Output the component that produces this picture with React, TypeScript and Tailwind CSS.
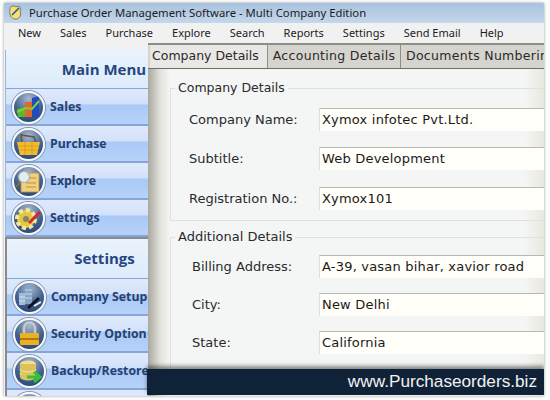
import { FC, ReactNode } from 'react';

const Orb: FC<{ children?: ReactNode }> = ({ children }) => (
  <div className="w-[33px] h-[33px] shrink-0 rounded-full border-[2px] border-[#f4f7fb] bg-[radial-gradient(circle_at_50%_20%,#a9b8cc,#41608f_55%,#22406f_100%)] shadow-[0_0_0_1px_#8a95a8] flex items-center justify-center overflow-hidden">
    <svg width="29" height="29" viewBox="0 0 29 29">{children}</svg>
  </div>
);

const SalesIcon = () => (
  <Orb>
    <path d="M3 16 L11 14 V24 H4 Z" fill="#55bb2c" />
    <rect x="11" y="9" width="7" height="15" fill="#e2672a" />
    <path d="M18 5 L25 3 V24 H18 Z" fill="#1f4cc0" />
    <path d="M3 19 L12 15 L18 16 L25 8" fill="none" stroke="#7fd13c" strokeWidth="2" />
  </Orb>
);
const PurchaseIcon = () => (
  <Orb>
    <path d="M8 12 L7 5 L20 7 L22 13" fill="none" stroke="#5d5a44" strokeWidth="1.6" />
    <path d="M3 12 L26 12 L23 25 H6 Z" fill="#f0bc2e" />
    <path d="M5 16 H25 M6 20 H24 M11 12 V25 M18 12 V25" stroke="#d2981a" strokeWidth="0.8" />
  </Orb>
);
const ExploreIcon = () => (
  <Orb>
    <rect x="7" y="6" width="18" height="19" fill="#efd083" stroke="#b98d3f" strokeWidth="0.8" />
    <path d="M14 11 H22 M12 16 H22 M12 20 H22" stroke="#c29038" strokeWidth="1.2" />
    <circle cx="10" cy="10" r="5.5" fill="#e3eef0" stroke="#a4b1b5" strokeWidth="1.2" />
    <path d="M6 15 L2 20" stroke="#8b6a36" strokeWidth="2" />
  </Orb>
);
const SettingsIcon = () => (
  <Orb>
    <circle cx="12" cy="15" r="9" fill="#e4c63f" stroke="#f2e79a" strokeWidth="4" strokeDasharray="4 3" />
    <circle cx="12" cy="15" r="3" fill="#7f8667" />
    <path d="M15 19 L26 8" stroke="#cf2a34" strokeWidth="3" />
  </Orb>
);
const CompanyIcon = () => (
  <Orb>
    <rect x="10" y="3" width="7" height="18" fill="#86a6c8" />
    <rect x="4" y="10" width="6" height="12" fill="#a3bcd6" />
    <path d="M10 7 H17 M10 11 H17 M10 15 H17 M4 14 H10 M4 18 H10" stroke="#d7e4f0" strokeWidth="0.8" />
    <path d="M13 25 L24 15" stroke="#10131c" strokeWidth="3" />
    <path d="M19 23 L26 19" stroke="#e9edf0" strokeWidth="2" />
  </Orb>
);
const LockIcon = () => (
  <Orb>
    <path d="M9 14 V8 A5 5 0 0 1 20 8 V14" fill="none" stroke="#c3cbcf" strokeWidth="2.6" />
    <rect x="5" y="13" width="19" height="12" rx="1" fill="#ecb021" />
    <rect x="5" y="18" width="19" height="2" fill="#a97a12" />
  </Orb>
);
const BackupIcon = () => (
  <Orb>
    <ellipse cx="13" cy="7" rx="8" ry="3.5" fill="#f0e08a" />
    <rect x="5" y="7" width="16" height="13" fill="#dcc25c" />
    <path d="M5 12 A8 3 0 0 0 21 12 M5 16 A8 3 0 0 0 21 16" fill="none" stroke="#f2e59a" strokeWidth="1" />
    <ellipse cx="13" cy="20" rx="8" ry="3.5" fill="#dcc25c" />
    <path d="M12 20 H24 M19 15 L25 20 L19 25" fill="none" stroke="#30c238" strokeWidth="3" />
  </Orb>
);

const SideItem: FC<{ icon: ReactNode; label: string }> = ({ icon, label }) => (
  <div className="h-[37px] shrink-0 flex items-center gap-[5px] pl-[6px] pt-[1px] border-b-[2px] border-[#85a6dc] bg-[linear-gradient(#dfe9fb_0%,#d3e2fa_42%,#a9c9f6_46%,#b6d2f8_100%)]">
    {icon}
    <span className="font-['Open_Sans',sans-serif] font-bold text-[12.3px] text-[#26406f] whitespace-nowrap">{label}</span>
  </div>
);

const SideHead: FC<{ label: string; heightClass: string }> = ({ label, heightClass }) => (
  <div className={`${heightClass} shrink-0 flex items-center justify-center pl-[54px] border-b border-[#85a6dc] bg-[linear-gradient(#eaf3fd,#dcebfb)]`}>
    <span className="font-['Open_Sans',sans-serif] font-bold text-[15px] text-[#25477f] whitespace-nowrap">{label}</span>
  </div>
);

const Field: FC<{ label: string; value?: string; labelClass: string; boxClass?: string }> = ({
  label,
  value,
  labelClass,
  boxClass,
}) => (
  <div className={`flex items-center ${boxClass ?? ''}`}>
    <span className={`shrink-0 whitespace-nowrap ${labelClass}`}>{label}</span>
    <div className="flex-1 h-[23px] flex items-center pl-[2px] border-t border-[#b8b8b2] border-l border-l-[#dedede] bg-[#fffef8] tracking-[0.2px] text-[#1a1a1a] whitespace-nowrap">
      {value}
    </div>
  </div>
);

export default function App() {
  return (
    <div className="w-[550px] h-[400px] overflow-hidden bg-white pl-[4px] pt-[3px]">
      <div className="relative w-[540px] h-[393px] overflow-hidden flex flex-col shadow-[0_0_3px_#999] font-['DejaVu_Sans',sans-serif] text-[13px] text-[#2a2a2a]">
        <div className="h-[20px] shrink-0 flex items-center pl-[4px] gap-[6px] bg-[linear-gradient(#a9c2de,#c4d7eb)] font-['Noto_Sans',sans-serif] text-[11.3px] text-[#1c1c1c]">
          <svg width="15" height="16" viewBox="0 0 15 16">
            <path d="M2 5 C1 1 6 0 8 2 C11 0 14 3 12 6 C14 10 11 15 7 14 C3 14 1 9 2 5 Z" fill="#f4e26a" stroke="#555" strokeWidth="0.7" />
            <path d="M4 10 L11 3" stroke="#2b4fb0" strokeWidth="1.6" />
          </svg>
          <span>Purchase Order Management Software - Multi Company Edition</span>
        </div>
        <div className="h-[20px] shrink-0 flex items-center pl-[14px] gap-[19px] bg-[#f1f1f1] font-['Noto_Sans',sans-serif] text-[11px] text-[#1c1c1c]">
          {['New', 'Sales', 'Purchase', 'Explore', 'Search', 'Reports', 'Settings', 'Send Email', 'Help'].map((m) => (
            <span key={m}>{m}</span>
          ))}
        </div>
        <div className="flex-1 flex min-h-0 bg-[#f1f1f1]">
          <div className="w-[144px] shrink-0 pt-[7px] pl-[1px] flex flex-col">
            <div className="flex flex-col border-l border-[#9db5d8]">
              <SideHead label="Main Menu" heightClass="h-[39px]" />
              <SideItem icon={<SalesIcon />} label="Sales" />
              <SideItem icon={<PurchaseIcon />} label="Purchase" />
              <SideItem icon={<ExploreIcon />} label="Explore" />
              <SideItem icon={<SettingsIcon />} label="Settings" />
            </div>
            <div className="h-[2px] shrink-0 bg-[#8a8a8a]" />
            <div className="flex flex-col border-l-[2px] border-[#8a8a8a]">
              <SideHead label="Settings" heightClass="h-[40px]" />
              <SideItem icon={<CompanyIcon />} label="Company Setup" />
              <SideItem icon={<LockIcon />} label="Security Option" />
              <SideItem icon={<BackupIcon />} label="Backup/Restore" />
              <SideItem icon={<Orb />} label="" />
            </div>
          </div>
          <div className="flex-1 min-w-0 flex flex-col relative overflow-hidden bg-[linear-gradient(90deg,#a8a8a0_0px,#e2e2dc_12px,#f4f6f6_22px,#f4f6f6_95%,#e9e7e0_100%)]">
            <div className="h-[26px] shrink-0 flex items-end pl-[2px] bg-[#d6d4ce] border-t-[2px] border-[#8e8e88] border-b border-b-[#6f6f6a] text-[12.5px] whitespace-nowrap">
              <div className="w-[117px] shrink-0 h-[23px] flex items-center pl-[2px] bg-[#e9e8e4]">Company Details</div>
              <div className="w-[134px] shrink-0 h-[23px] flex items-center justify-center border-x border-[#8f8f8a] tracking-[0.3px]">Accounting Details</div>
              <div className="pl-[5px] h-[23px] shrink-0 flex items-center tracking-[0.3px]">Documents Numbering</div>
            </div>
            <div className="ml-[22px] mt-[19px] h-[133px] shrink-0 relative border-t border-l border-b border-[#e0e0dc]">
              <span className="absolute -top-[9px] left-[4px] px-[3px] bg-[#f4f6f6] leading-[16px] text-[12.5px]">Company Details</span>
              <div className="flex flex-col pl-[18px] pt-[19px]">
                <Field label="Company Name:" value="Xymox infotec Pvt.Ltd." labelClass="w-[130px]" boxClass="mb-[16px]" />
                <Field label="Subtitle:" value="Web Development" labelClass="w-[130px]" boxClass="mb-[17px]" />
                <Field label="Registration No.:" value="Xymox101" labelClass="w-[130px]" />
              </div>
            </div>
            <div className="ml-[22px] mt-[16px] flex-1 relative border-t border-l border-[#e0e0dc]">
              <span className="absolute -top-[9px] left-[4px] px-[3px] bg-[#f4f6f6] leading-[16px]">Additional Details</span>
              <div className="flex flex-col pl-[21px] pt-[17px]">
                <Field label="Billing Address:" value="A-39, vasan bihar, xavior road" labelClass="w-[127px]" boxClass="mb-[15px]" />
                <Field label="City:" value="New Delhi" labelClass="w-[127px]" boxClass="mb-[15px]" />
                <Field label="State:" value="California" labelClass="w-[127px]" boxClass="mb-[15px]" />
                <Field label="" labelClass="w-[127px]" />
              </div>
            </div>
          </div>
        </div>
        <div className="absolute left-[143px] right-0 bottom-[1px] h-[26px] flex items-center justify-end pr-[7px] bg-[#0f2238] shadow-[0_-3px_4px_rgba(0,0,0,0.45)] font-['Liberation_Sans',sans-serif] text-[17.2px] text-[#f2f2f2]">
          www.Purchaseorders.biz
        </div>
      </div>
    </div>
  );
}
